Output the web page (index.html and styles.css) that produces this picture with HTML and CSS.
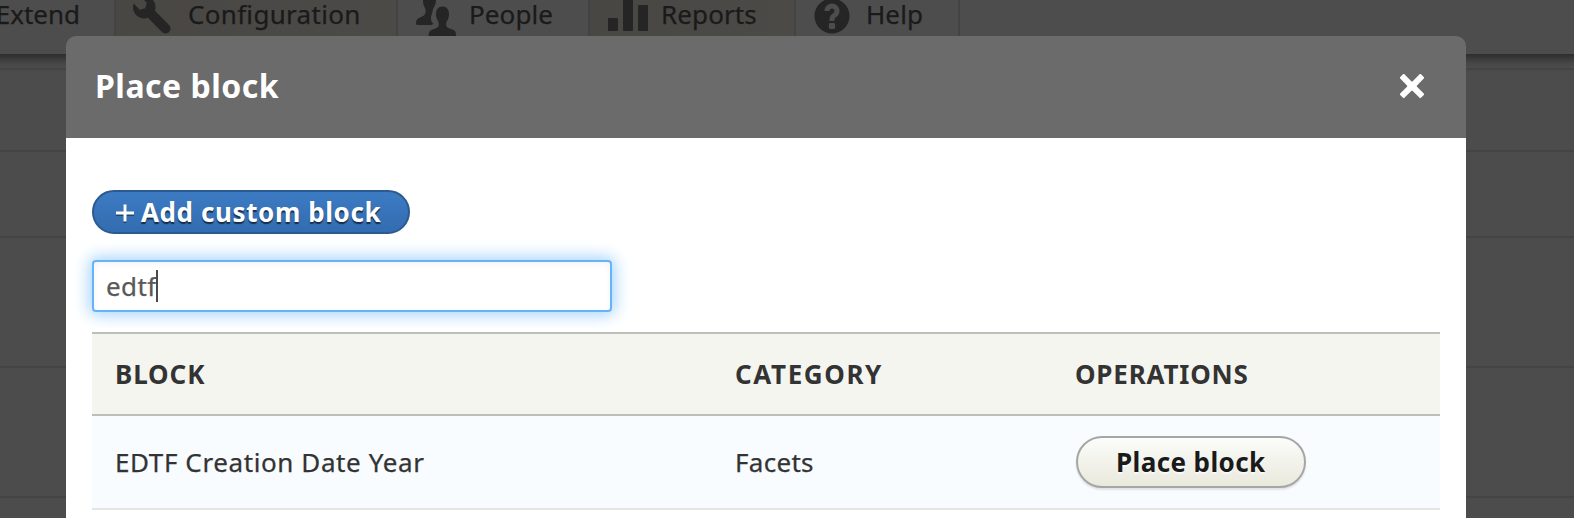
FILE: index.html
```html
<!DOCTYPE html>
<html lang="en">
<head>
<meta charset="utf-8">
<title>Place block</title>
<link rel="stylesheet" href="styles.css">
</head>
<body>
<div class="page">
  <nav class="tray">
    <a class="item extend"><span>Extend</span></a>
    <a class="item configuration tinted">
      <svg class="icon" viewBox="0 0 16 16"><path d="M14.416 11.586l-.01-.008v-.001l-5.656-5.656c.15-.449.252-.921.252-1.421 0-2.485-2.016-4.5-4.502-4.5-.505 0-.981.102-1.434.255l2.431 2.431-.588 2.196-2.196.588-2.445-2.445c-.162.464-.268.956-.268 1.475 0 2.486 2.014 4.5 4.5 4.5.5 0 .972-.102 1.421-.251l5.667 5.665c.781.781 2.047.781 2.828 0s.781-2.047 0-2.828z"/></svg>
      <span>Configuration</span>
    </a>
    <a class="item people">
      <svg class="icon" viewBox="0 0 40 40"><path d="M17.500 -2C13 -2 11 1 11 5C11 9 12.500 11 13.500 13C14 17.500 13 19.500 9 21C5.500 22.500 4 24 4 27.500Q4 29 5.500 29H18C19.500 29 20.500 28.500 21.500 27.500C19.500 26.500 18.800 24 19 21C19.500 18.500 20.500 16 21 13C22.500 10 24 8 24 5C24 1 22 -2 17.500 -2Z"/><path d="M30.500 10.500C26 10.500 24 14 24 18C24 22 25.500 24 26.500 26C27.500 31 26 31.500 22 33C18 34 16.700 36 16.700 39V44H44V39C44 36 43 34 39 33C35 31.500 33.500 31 34.500 26C35.500 24 37 22 37 18C37 14 35 10.500 30.500 10.500Z"/></svg>
      <span>People</span>
    </a>
    <a class="item reports tinted">
      <svg class="icon" viewBox="0 0 40 40"><rect y="22" width="10" height="13" rx="1"/><rect x="15" y="1" width="10" height="34" rx="1"/><rect x="30" y="9" width="10" height="26" rx="1"/></svg>
      <span>Reports</span>
    </a>
    <a class="item help">
      <svg class="icon" viewBox="0 0 16 16"><path d="M8.002 1c-3.868 0-7.002 3.134-7.002 7s3.134 7 7.002 7c3.865 0 7-3.134 7-7s-3.135-7-7-7zm3 5c0 .551-.16 1.085-.477 1.586l-.158.22c-.07.093-.189.241-.361.393-.168.148-.35.299-.545.447l-.203.189-.141.129-.096.17-.021.235v.63h-2.001v-.704c.026-.396.078-.73.204-.999.125-.269.271-.498.439-.688l.225-.21-.01-.015.176-.14.137-.128c.186-.139.357-.277.516-.417l.148-.18c.098-.152.168-.323.168-.518 0-.552-.447-1-1-1s-1.002.448-1.002 1h-2c0-1.657 1.343-3 3.002-3 1.656 0 3 1.343 3 3zm-1.75 6.619c0 .344-.281.625-.625.625h-1.25c-.345 0-.626-.281-.626-.625v-1.238c0-.344.281-.625.626-.625h1.25c.344 0 .625.281.625.625v1.238z"/></svg>
      <span>Help</span>
    </a>
  </nav>
  <div class="rows">
    <div class="gap"></div><div class="r80"></div><div class="r84"></div><div class="r128"></div><div class="r128"></div><div class="r19"></div><div class="r84"></div>
  </div>
</div>

<section class="dialog">
  <header class="titlebar">
    <h1>Place block</h1>
    <svg class="close" viewBox="0 0 16 16"><path d="M3.51 13.925c.194.194.512.195.706.001l3.432-3.431c.194-.194.514-.194.708 0l3.432 3.431c.192.194.514.193.707-.001l1.405-1.417c.191-.195.189-.514-.002-.709l-3.397-3.4c-.192-.193-.192-.514-.002-.708l3.401-3.43c.189-.195.189-.515 0-.709l-1.407-1.418c-.195-.195-.513-.195-.707-.001l-3.43 3.431c-.195.194-.516.194-.708 0l-3.432-3.431c-.195-.195-.512-.194-.706.001l-1.407 1.417c-.194.195-.194.515 0 .71l3.403 3.429c.193.195.193.514-.001.708l-3.4 3.399c-.194.195-.195.516-.001.709l1.406 1.419z"/></svg>
  </header>
  <div class="content">
    <a class="add"><svg class="plus" viewBox="0 0 18 18"><path class="shade" d="M9 2V19M0 10.500H18"/><path d="M9 .5V17.500M0 9H18"/></svg><span>Add custom block</span></a>
    <div class="search"><span>edtf</span><i class="caret"></i></div>
    <div class="table">
      <div class="row head">
        <span class="c-block">BLOCK</span><span class="c-category">CATEGORY</span><span class="c-operations">OPERATIONS</span>
      </div>
      <div class="row body">
        <span class="name">EDTF Creation Date Year</span><span class="facets">Facets</span><span><a class="place"><span>Place block</span></a></span>
      </div>
    </div>
  </div>
</section>
</body>
</html>
```
FILE: styles.css
```css
* { box-sizing: border-box; }
body {
  margin: 0;
  width: 1574px;
  height: 518px;
  overflow: hidden;
  font: 26px/28px "Noto Sans", "Open Sans", sans-serif;
  color: #333;
  white-space: nowrap;
  -webkit-text-stroke: .25px;
}
.page { height: 518px; overflow: hidden; background: #4c4c4c; }

.tray {
  display: flex;
  height: 54px;
  margin: 0 -20px;
  padding: 0 20px;
  background: #4d4d4d;
  box-shadow: 0 3px 10px 1px rgba(0, 0, 0, .5);
  color: #1a1a1a;
}
.item { display: flex; height: 54px; border-right: 2px solid #434343; }
.item.tinted { background: linear-gradient(90deg, #484744, #4b4a46); }
.item span { height: 28px; }
.icon { width: 40px; height: 40px; margin-top: -4px; fill: #252525; overflow: visible; }
.extend { width: 116px; justify-content: flex-end; padding-right: 34px; }
.configuration { width: 282px; padding-left: 17px; gap: 15px; letter-spacing: .3px; }
.people { width: 192px; padding-left: 14px; gap: 17px; letter-spacing: .1px; }
.reports { width: 206px; padding-left: 18px; gap: 13px; letter-spacing: .1px; }
.help { width: 164px; padding-left: 16px; gap: 14px; letter-spacing: .1px; }

.rows > div { border-bottom: 2px solid #444; }
.gap { height: 16px; }
.r80 { height: 82px; }
.r84 { height: 86px; }
.r128 { height: 130px; }
.r19 { height: 22px; }

.dialog {
  position: absolute;
  left: 66px;
  top: 36px;
  width: 1400px;
  height: 482px;
}
.titlebar {
  display: flex;
  align-items: center;
  justify-content: space-between;
  height: 102px;
  padding: 0 38px 2px 29px;
  background: #6b6b6b;
  border-radius: 10px 10px 0 0;
}
h1 { margin: 0; font-size: 32px; line-height: 40px; letter-spacing: .5px; color: #fff; -webkit-text-stroke: 0; }
.close { width: 32px; height: 32px; fill: #fff; }

.content {
  display: flex;
  flex-direction: column;
  align-items: flex-start;
  height: 380px;
  padding: 52px 26px 0;
  background: #fff;
}
.add {
  display: flex;
  align-items: center;
  gap: 7px;
  width: 318px;
  height: 44px;
  padding-left: 22px;
  border: 2px solid #2c5a8f;
  border-radius: 22px;
  background: linear-gradient(#3c7bc3, #336cb0);
  color: #fff;
  font-weight: 700;
  letter-spacing: .6px;
  text-shadow: 0 2px 1px rgba(0, 0, 0, .6);
  -webkit-text-stroke: 0;
}
.plus { width: 18px; height: 18px; margin-top: 2px; overflow: visible; fill: none; stroke: #fff; stroke-width: 3; }
.plus .shade { stroke: rgba(0, 0, 0, .4); }
.search {
  display: flex;
  align-items: center;
  width: 520px;
  height: 52px;
  margin: 26px 0 20px;
  padding-left: 12px;
  border: 2px solid #65b3f9;
  border-radius: 4px;
  background: #fff;
  box-shadow: inset 0 2px 6px rgba(0, 0, 0, .05), 0 0 16px 3px #a5d3fb;
  color: #595959;
  letter-spacing: .4px;
}
.caret { width: 2px; height: 32px; background: #4a4a4a; margin-left: -1px; }

.table { width: 1348px; }
.row { display: grid; grid-template-columns: 620px 341px 1fr; align-items: center; padding-left: 23px; }
.head {
  height: 84px;
  border-top: 2px solid #bfbfba;
  border-bottom: 2px solid #bebeb6;
  background: #f5f5f0;
  font-weight: 700;
  -webkit-text-stroke: 0;
}
.c-block { letter-spacing: .9px; }
.c-category { letter-spacing: 1.6px; }
.c-operations { letter-spacing: .8px; margin-left: -1px; }
.name { letter-spacing: .6px; }
.facets { letter-spacing: .3px; }
.body { height: 94px; border-bottom: 2px solid #e6e6e1; background: #f8fcff; }
.place {
  display: flex;
  align-items: center;
  width: 230px;
  height: 52px;
  padding-left: 38px;
  border: 2px solid #a6a6a6;
  border-radius: 26px;
  background: linear-gradient(#fcfcfa, #e9e9dd);
  box-shadow: 0 2px 2px rgba(0, 0, 0, .1);
  color: #1a1a1a;
  font-weight: 700;
  letter-spacing: .4px;
  text-shadow: 0 2px 0 rgba(255, 255, 255, .6);
  -webkit-text-stroke: 0;
}
```
